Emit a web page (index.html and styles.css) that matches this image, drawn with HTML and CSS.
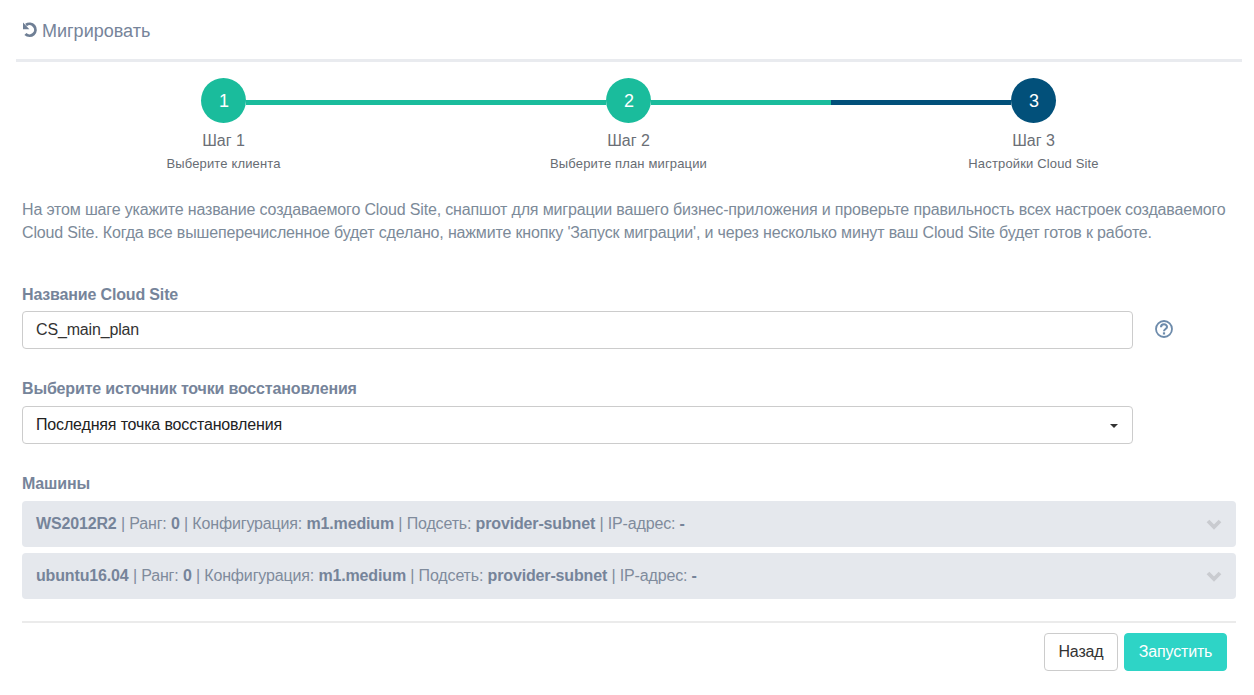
FILE: index.html
```html
<!DOCTYPE html>
<html lang="ru">
<head>
<meta charset="utf-8">
<title>Мигрировать</title>
<link rel="stylesheet" href="styles.css">
</head>
<body>
<div class="page">
  <header class="head">
    <svg class="undo" viewBox="0 0 16 16" width="16" height="16"><path d="M4 3 A5.9 5.9 0 1 1 3.4 12" fill="none" stroke="#6f7f95" stroke-width="2.9"/><path d="M1 0.6 L1 7.2 L7.4 7.2 Z" fill="#6f7f95"/></svg>
    <span>Мигрировать</span>
  </header>
  <main class="content">
    <div class="stepper">
      <div class="step">
        <div class="track"><i class="bar"></i><b class="dot green">1</b><i class="bar green"></i></div>
        <div class="step-title">Шаг 1</div>
        <div class="step-sub">Выберите клиента</div>
      </div>
      <div class="step">
        <div class="track"><i class="bar green"></i><b class="dot green">2</b><i class="bar green"></i></div>
        <div class="step-title">Шаг 2</div>
        <div class="step-sub">Выберите план миграции</div>
      </div>
      <div class="step">
        <div class="track"><i class="bar blue"></i><b class="dot blue">3</b><i class="bar"></i></div>
        <div class="step-title">Шаг 3</div>
        <div class="step-sub">Настройки Cloud Site</div>
      </div>
    </div>
    <p class="intro">На этом шаге укажите название создаваемого Cloud Site, снапшот для миграции вашего бизнес-приложения и проверьте правильность всех настроек создаваемого Cloud Site. Когда все вышеперечисленное будет сделано, нажмите кнопку 'Запуск миграции', и через несколько минут ваш Cloud Site будет готов к работе.</p>

    <label class="label name-label">Название Cloud Site</label>
    <div class="field-row">
      <div class="input">CS_main_plan</div>
      <svg class="help" viewBox="0 0 18 18" width="18" height="18"><circle cx="9" cy="9" r="8" fill="none" stroke="#6d8bab" stroke-width="1.8"/><path d="M6 7.2 C6 3.4 12 3.4 12 7 C12 9 9 9 9 11.2" fill="none" stroke="#6d8bab" stroke-width="2.1"/><rect x="7.9" y="12.3" width="2.2" height="2.2" fill="#6d8bab"/></svg>
    </div>

    <label class="label source-label">Выберите источник точки восстановления</label>
    <div class="select">Последняя точка восстановления<i class="caret"></i></div>

    <label class="label machines-label">Машины</label>
    <div class="machine">
      <span><b>WS2012R2</b> | Ранг: <b>0</b> | Конфигурация: <b>m1.medium</b> | Подсеть: <b>provider-subnet</b> | IP-адрес: <b>-</b></span>
      <svg class="chev" viewBox="0 0 16 11" width="16" height="11"><path d="M2 2 L8 8 L14 2" fill="none" stroke="#c9cbd0" stroke-width="3.8"/></svg>
    </div>
    <div class="machine">
      <span><b>ubuntu16.04</b> | Ранг: <b>0</b> | Конфигурация: <b>m1.medium</b> | Подсеть: <b>provider-subnet</b> | IP-адрес: <b>-</b></span>
      <svg class="chev" viewBox="0 0 16 11" width="16" height="11"><path d="M2 2 L8 8 L14 2" fill="none" stroke="#c9cbd0" stroke-width="3.8"/></svg>
    </div>
    <footer class="actions">
      <button class="btn back">Назад</button>
      <button class="btn run">Запустить</button>
    </footer>
  </main>
</div>
</body>
</html>
```
FILE: styles.css
```css
* { box-sizing: border-box; }
html, body { margin: 0; height: 100%; background: #fff; overflow: hidden; }
body { font-family: "Liberation Sans", Arial, sans-serif; font-size: 16px; letter-spacing: -0.16px; color: #76838f; }
.page { padding: 0 12px 0 16px; }
.head {
  height: 62px;
  border-bottom: 3px solid #e9ebef;
  padding: 21px 0 0 6px;
  display: flex;
  align-items: flex-start;
  gap: 4px;
  font-size: 18px;
  letter-spacing: 0;
  line-height: 20px;
  color: #76849a;
}
.undo { margin-top: 1px; }
.content { padding: 16px 6px 0 6px; }
.stepper { display: grid; grid-template-columns: repeat(3, 405px); margin-left: -1px; text-align: center; }
.track { display: flex; height: 45px; }
.bar { flex: 1; height: 5px; margin-top: 22px; }
.bar.green { background: #1abc9c; }
.bar.blue { background: #02507a; }
.dot {
  width: 45px; height: 45px; border-radius: 50%; padding-left: 1px;
  color: #fff; font-weight: 400; font-size: 18px; line-height: 46px; letter-spacing: 0;
}
.dot.green { background: #1abc9c; }
.dot.blue { background: #02507a; }
.step-title { font-size: 16px; letter-spacing: 0; line-height: 20px; margin-top: 8px; color: #6b6f76; }
.step-sub { font-size: 13px; letter-spacing: 0.15px; line-height: 16px; margin-top: 5px; color: #676c73; }
.intro { margin: 26px 0 0; line-height: 23px; color: #7c8a99; }
.label { display: block; font-weight: 700; color: #76849a; line-height: 20px; }
.name-label { margin-top: 41px; }
.field-row { display: flex; align-items: center; margin-top: 6px; }
.input, .select {
  width: 1111px; height: 38px;
  border: 1px solid #ccc; border-radius: 4px;
  padding: 0 13px; line-height: 35px; color: #333;
}
.help { margin-left: 22px; margin-bottom: 2px; }
.source-label { margin-top: 30px; }
.select { margin-top: 7px; position: relative; color: #222; }
.caret {
  position: absolute; right: 14px; top: 17px;
  border-left: 4px solid transparent; border-right: 4px solid transparent; border-top: 4px solid #333;
}
.machines-label { margin-top: 30px; }
.machine {
  height: 46px; margin-top: 6px;
  background: #e5e8ed; border-radius: 4px;
  padding: 0 14px;
  display: flex; align-items: center; justify-content: space-between;
  letter-spacing: -0.15px;
  color: #7f8b9c;
}
.machines-label + .machine { margin-top: 7px; }
.machine b { color: #76849a; }
.actions {
  margin-top: 22px; border-top: 2px solid #ebebeb;
  padding: 10px 9px 0 0;
  display: flex; justify-content: flex-end; gap: 6px;
}
.btn {
  height: 38px; border-radius: 4px; font: inherit; letter-spacing: inherit; padding: 0;
}
.back { width: 74px; background: #fff; border: 1px solid #ccc; color: #333; }
.run { width: 103px; background: #2ed4c6; border: 1px solid #2ed4c6; color: #fff; }
```
